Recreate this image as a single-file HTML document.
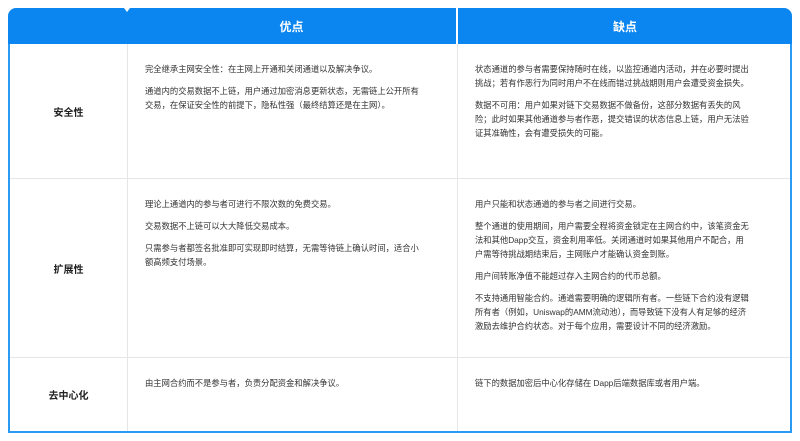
<!DOCTYPE html>
<html><head><meta charset="utf-8"><style>
body{margin:0;background:#fff;width:800px;height:441px;overflow:hidden;font-family:"Liberation Sans","Noto Sans CJK SC",sans-serif;}
.wrap{position:absolute;left:8px;top:8px;width:784px;height:425px;}
.hdr{position:absolute;top:0;height:36px;background:#0b86f0;color:#fff;font-size:12px;font-weight:bold;display:flex;align-items:center;justify-content:center;}
.body{position:absolute;left:0;top:36px;width:780px;height:387px;border:2px solid #2b9af5;border-top:none;background:#fff;}
.row{position:absolute;left:0;width:780px;border-bottom:1px solid #e6e6e6;}
.lab{position:absolute;left:0;width:117px;top:0;bottom:0;display:flex;align-items:center;justify-content:center;font-size:10px;font-weight:bold;color:#222;border-right:1px solid #e6e6e6;}
.c{position:absolute;top:0;bottom:0;font-size:8.3px;line-height:14px;color:#333;padding-top:18px;box-sizing:border-box;}
.c1{left:117px;width:331px;padding-left:18px;padding-right:30px;border-right:1px solid #e6e6e6;}
.c2{left:448px;width:332px;padding-left:17px;padding-right:38px;}
.c p{margin:0 0 8px 0;}
</style></head><body>
<div class="wrap">
<div class="hdr" style="left:0;width:448px;border-radius:8px 0 0 0;">&nbsp;</div>
<div class="hdr" style="left:119px;width:329px;background:transparent;">优点</div>
<div style="position:absolute;left:116px;top:0;width:0;height:0;border-left:3px solid transparent;border-right:3px solid transparent;border-top:4px solid #fff;"></div>
<div class="hdr" style="left:450px;width:334px;border-radius:0 8px 0 0;">缺点</div>
<div class="body">
<div class="row" style="top:0;height:134px;">
<div class="lab">安全性</div>
<div class="c c1"><p>完全继承主网安全性：在主网上开通和关闭通道以及解决争议。</p><p>通道内的交易数据不上链，用户通过加密消息更新状态，无需链上公开所有交易，在保证安全性的前提下，隐私性强（最终结算还是在主网）。</p></div>
<div class="c c2"><p>状态通道的参与者需要保持随时在线，以监控通道内活动，并在必要时提出挑战；若有作恶行为同时用户不在线而错过挑战期则用户会遭受资金损失。</p><p>数据不可用：用户如果对链下交易数据不做备份，这部分数据有丢失的风险；此时如果其他通道参与者作恶，提交错误的状态信息上链，用户无法验证其准确性，会有遭受损失的可能。</p></div>
</div>
<div class="row" style="top:135px;height:178px;">
<div class="lab">扩展性</div>
<div class="c c1" style="padding-top:18px"><p>理论上通道内的参与者可进行不限次数的免费交易。</p><p>交易数据不上链可以大大降低交易成本。</p><p>只需参与者都签名批准即可实现即时结算，无需等待链上确认时间，适合小额高频支付场景。</p></div>
<div class="c c2" style="padding-top:18px"><p>用户只能和状态通道的参与者之间进行交易。</p><p>整个通道的使用期间，用户需要全程将资金锁定在主网合约中，该笔资金无法和其他Dapp交互，资金利用率低。关闭通道时如果其他用户不配合，用户需等待挑战期结束后，主网账户才能确认资金到账。</p><p>用户间转账净值不能超过存入主网合约的代币总额。</p><p>不支持通用智能合约。通道需要明确的逻辑所有者。一些链下合约没有逻辑所有者（例如，Uniswap的AMM流动池），而导致链下没有人有足够的经济激励去维护合约状态。对于每个应用，需要设计不同的经济激励。</p></div>
</div>
<div class="row" style="top:314px;height:73px;border-bottom:none;">
<div class="lab">去中心化</div>
<div class="c c1"><p>由主网合约而不是参与者，负责分配资金和解决争议。</p></div>
<div class="c c2"><p>链下的数据加密后中心化存储在 Dapp后端数据库或者用户端。</p></div>
</div>
</div>
</div>
</body></html>
